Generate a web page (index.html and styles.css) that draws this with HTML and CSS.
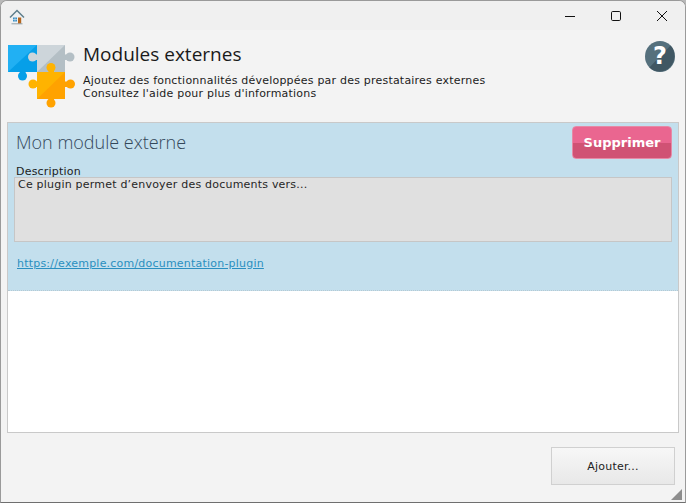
FILE: index.html
```html
<!DOCTYPE html>
<html lang="fr">
<head>
<meta charset="utf-8">
<title>Modules externes</title>
<link rel="stylesheet" href="styles.css">
</head>
<body>
<div class="window">
  <div class="titlebar">
    <svg class="app-icon" width="16" height="16" viewBox="0 0 16 16">
      <path d="M3 7.5V14.5H13.5V7.5L8 2.5Z" fill="#eef1f3"/>
      <path d="M1 8.5L8 1.5L15 8.5" fill="none" stroke="#5f7f8c" stroke-width="1.5"/>
      <rect x="4" y="8.5" width="4" height="4" fill="#3a8fc4"/>
      <path d="M6 8.5V12.5M4 10.5H8" stroke="#dfeaf2" stroke-width=".6"/>
      <rect x="9" y="8.5" width="3.2" height="6" fill="#b5651d"/>
      <path d="M2.5 14.8H13.5" stroke="#7c8b93" stroke-width=".8"/>
    </svg>
    <div class="controls">
      <svg class="ctl" width="46" height="30" viewBox="0 0 46 30"><path d="M18 15.5H28" stroke="#111" stroke-width="1"/></svg>
      <svg class="ctl" width="46" height="30" viewBox="0 0 46 30"><rect x="18.5" y="10.5" width="9" height="9" rx="1.2" fill="none" stroke="#111"/></svg>
      <svg class="ctl" width="46" height="30" viewBox="0 0 46 30"><path d="M18 10L28 20M28 10L18 20" stroke="#111" stroke-width="1"/></svg>
    </div>
  </div>
  <div class="content">
    <header class="header">
      <svg class="puzzle" width="68" height="68" viewBox="0 0 68 68">
        <path d="M0 1H29V28H0Z" fill="#21b0f3"/>
        <path d="M29 1V28H0Z" fill="#069fe8"/>
        <rect x="12" y="26" width="5.500" height="4" fill="#069fe8"/>
        <circle cx="14.500" cy="32" r="4.500" fill="#069fe8"/>
        <path d="M29 1H57V28H29Z" fill="#cdd5da"/>
        <path d="M57 1V28H29Z" fill="#b4bfc5"/>
        <rect x="25" y="10.500" width="6" height="5.500" fill="#cdd5da"/>
        <circle cx="24.500" cy="13" r="4.500" fill="#cdd5da"/>
        <rect x="56" y="10.500" width="5" height="5.500" fill="#b4bfc5"/>
        <circle cx="62" cy="13" r="4.500" fill="#b4bfc5"/>
        <path d="M29 28H57V55H29Z" fill="#ffb300"/>
        <path d="M57 28V55H29Z" fill="#ffa200"/>
        <rect x="40.500" y="25" width="5.500" height="5" fill="#ffb300"/>
        <circle cx="43" cy="23.500" r="4.500" fill="#ffb300"/>
        <rect x="27" y="37.500" width="4" height="5.500" fill="#ffb300"/>
        <circle cx="25" cy="40" r="4.500" fill="#ffb300"/>
        <rect x="56" y="37.500" width="5" height="5.500" fill="#ffa200"/>
        <circle cx="62.500" cy="40" r="4.500" fill="#ffa200"/>
        <rect x="40.500" y="54" width="5.500" height="4" fill="#ffa200"/>
        <circle cx="43" cy="59" r="4.500" fill="#ffa200"/>
      </svg>
      <div class="heading">
        <h1 class="title">Modules externes</h1>
        <p class="subtitle">Ajoutez des fonctionnalités développées par des prestataires externes</p>
        <p class="subtitle">Consultez l'aide pour plus d'informations</p>
      </div>
      <div class="help">
        <svg width="30" height="31" viewBox="0 0 32 32" preserveAspectRatio="none">
          <circle cx="16" cy="16" r="16" fill="#55707d"/>
          <path d="M27.300 4.700A16 16 0 0 1 4.700 27.300Z" fill="#405763"/>
        </svg>
        <span class="help-mark">?</span>
      </div>
    </header>
    <main class="list">
      <section class="module">
        <div class="module-head">
          <h2 class="module-name">Mon module externe</h2>
          <button class="delete" type="button">Supprimer</button>
        </div>
        <div class="desc-label">Description</div>
        <div class="desc">Ce plugin permet d’envoyer des documents vers...</div>
        <a class="doc-link" href="#">https://exemple.com/documentation-plugin</a>
      </section>
    </main>
    <footer class="footer">
      <button class="add" type="button">Ajouter...</button>
    </footer>
    <svg class="grip" width="12" height="12" viewBox="0 0 12 12"><path d="M12 1V12H1Z" fill="#8d8d8d"/></svg>
  </div>
</div>
</body>
</html>
```
FILE: styles.css
```css
* { box-sizing: border-box; }
html, body { margin: 0; height: 100%; background: #b9b9b9; overflow: hidden; }
body { font-family: "DejaVu Sans", sans-serif; font-size: 11px; letter-spacing: .21px; color: #1c1c1c; }
.window {
  height: 503px;
  width: 686px;
  display: flex;
  flex-direction: column;
  background: #f3f3f3;
  border: 1px solid #9a9a9a;
  border-bottom-color: #6f6f6f;
  border-radius: 7px 7px 0 0;
  overflow: hidden;
}
.titlebar {
  height: 29px;
  flex: none;
  display: flex;
  align-items: center;
  justify-content: space-between;
  padding-left: 8px;
  background: #f0f0f0;
}
.app-icon { display: block; margin-top: 2px; }
.controls { display: flex; }
.ctl { display: block; }
.content { position: relative; flex: 1; display: flex; flex-direction: column; min-height: 0; }
.header { height: 92px; flex: none; display: flex; align-items: flex-start; padding: 10px 0 0 7px; }
.puzzle { flex: none; display: block; margin-top: 4px; }
.heading { flex: 1; margin-left: 7px; padding-top: 1px; }
.title { margin: 0 0 7px; font: 400 19px/26px "Open Sans", sans-serif; letter-spacing: 0; color: #1a1a1a; }
.subtitle { margin: 0; font-size: 11px; line-height: 13px; white-space: nowrap; }
.help { position: relative; width: 30px; height: 31px; margin: 1px 10px 0 0; flex: none; }
.help svg { display: block; }
.help-mark {
  position: absolute; inset: 0;
  text-align: center;
  font: 700 24px/30px "DejaVu Sans", sans-serif;
  letter-spacing: 0;
  color: #fff;
}
.list {
  height: 311px;
  flex: none;
  margin: 0 6px 0 6px;
  background: #fff;
  border: 1px solid #c9c9c9;
}
.module {
  height: 168px;
  background: #c3dfed;
  border-bottom: 1px dotted #b5c9d3;
  padding: 3px 6px 0 6px;
}
.module-head { display: flex; justify-content: space-between; align-items: flex-start; height: 39px; }
.module-name { margin: 3px 0 0 2px; font: 300 18px/26px "Open Sans", sans-serif; letter-spacing: 0; color: #33475a; }
.delete {
  width: 100px;
  height: 33px;
  padding: 0;
  border: 1px solid #e58aa6;
  border-radius: 4px;
  background: linear-gradient(#ea6690 0, #ea6690 50%, #d05274 50%, #d05274 100%);
  color: #fff;
  font: 700 13px "DejaVu Sans", sans-serif;
}
.desc-label { margin-left: 2px; line-height: 13px; font-size: 11px; }
.desc {
  height: 65px;
  margin-top: -1px;
  background: #e0e0e0;
  border: 1px solid #c6c6c6;
  padding: 0 0 0 3px;
  line-height: 13px;
  color: #262626;
}
.doc-link { display: inline-block; margin: 15px 0 0 3px; color: #2a8fc0; line-height: 14px; font-size: 11px; }
.footer { flex: 1; display: flex; justify-content: flex-end; padding: 14px 10px 0 0; }
.add {
  width: 124px;
  height: 38px;
  padding: 0;
  border: 1px solid #d0d0d0;
  background: linear-gradient(#f7f7f7, #e8e8e8);
  color: #222;
  font: 400 11px "DejaVu Sans", sans-serif;
  letter-spacing: .21px;
}
.grip { position: absolute; right: 3px; bottom: 2px; display: block; }
```
